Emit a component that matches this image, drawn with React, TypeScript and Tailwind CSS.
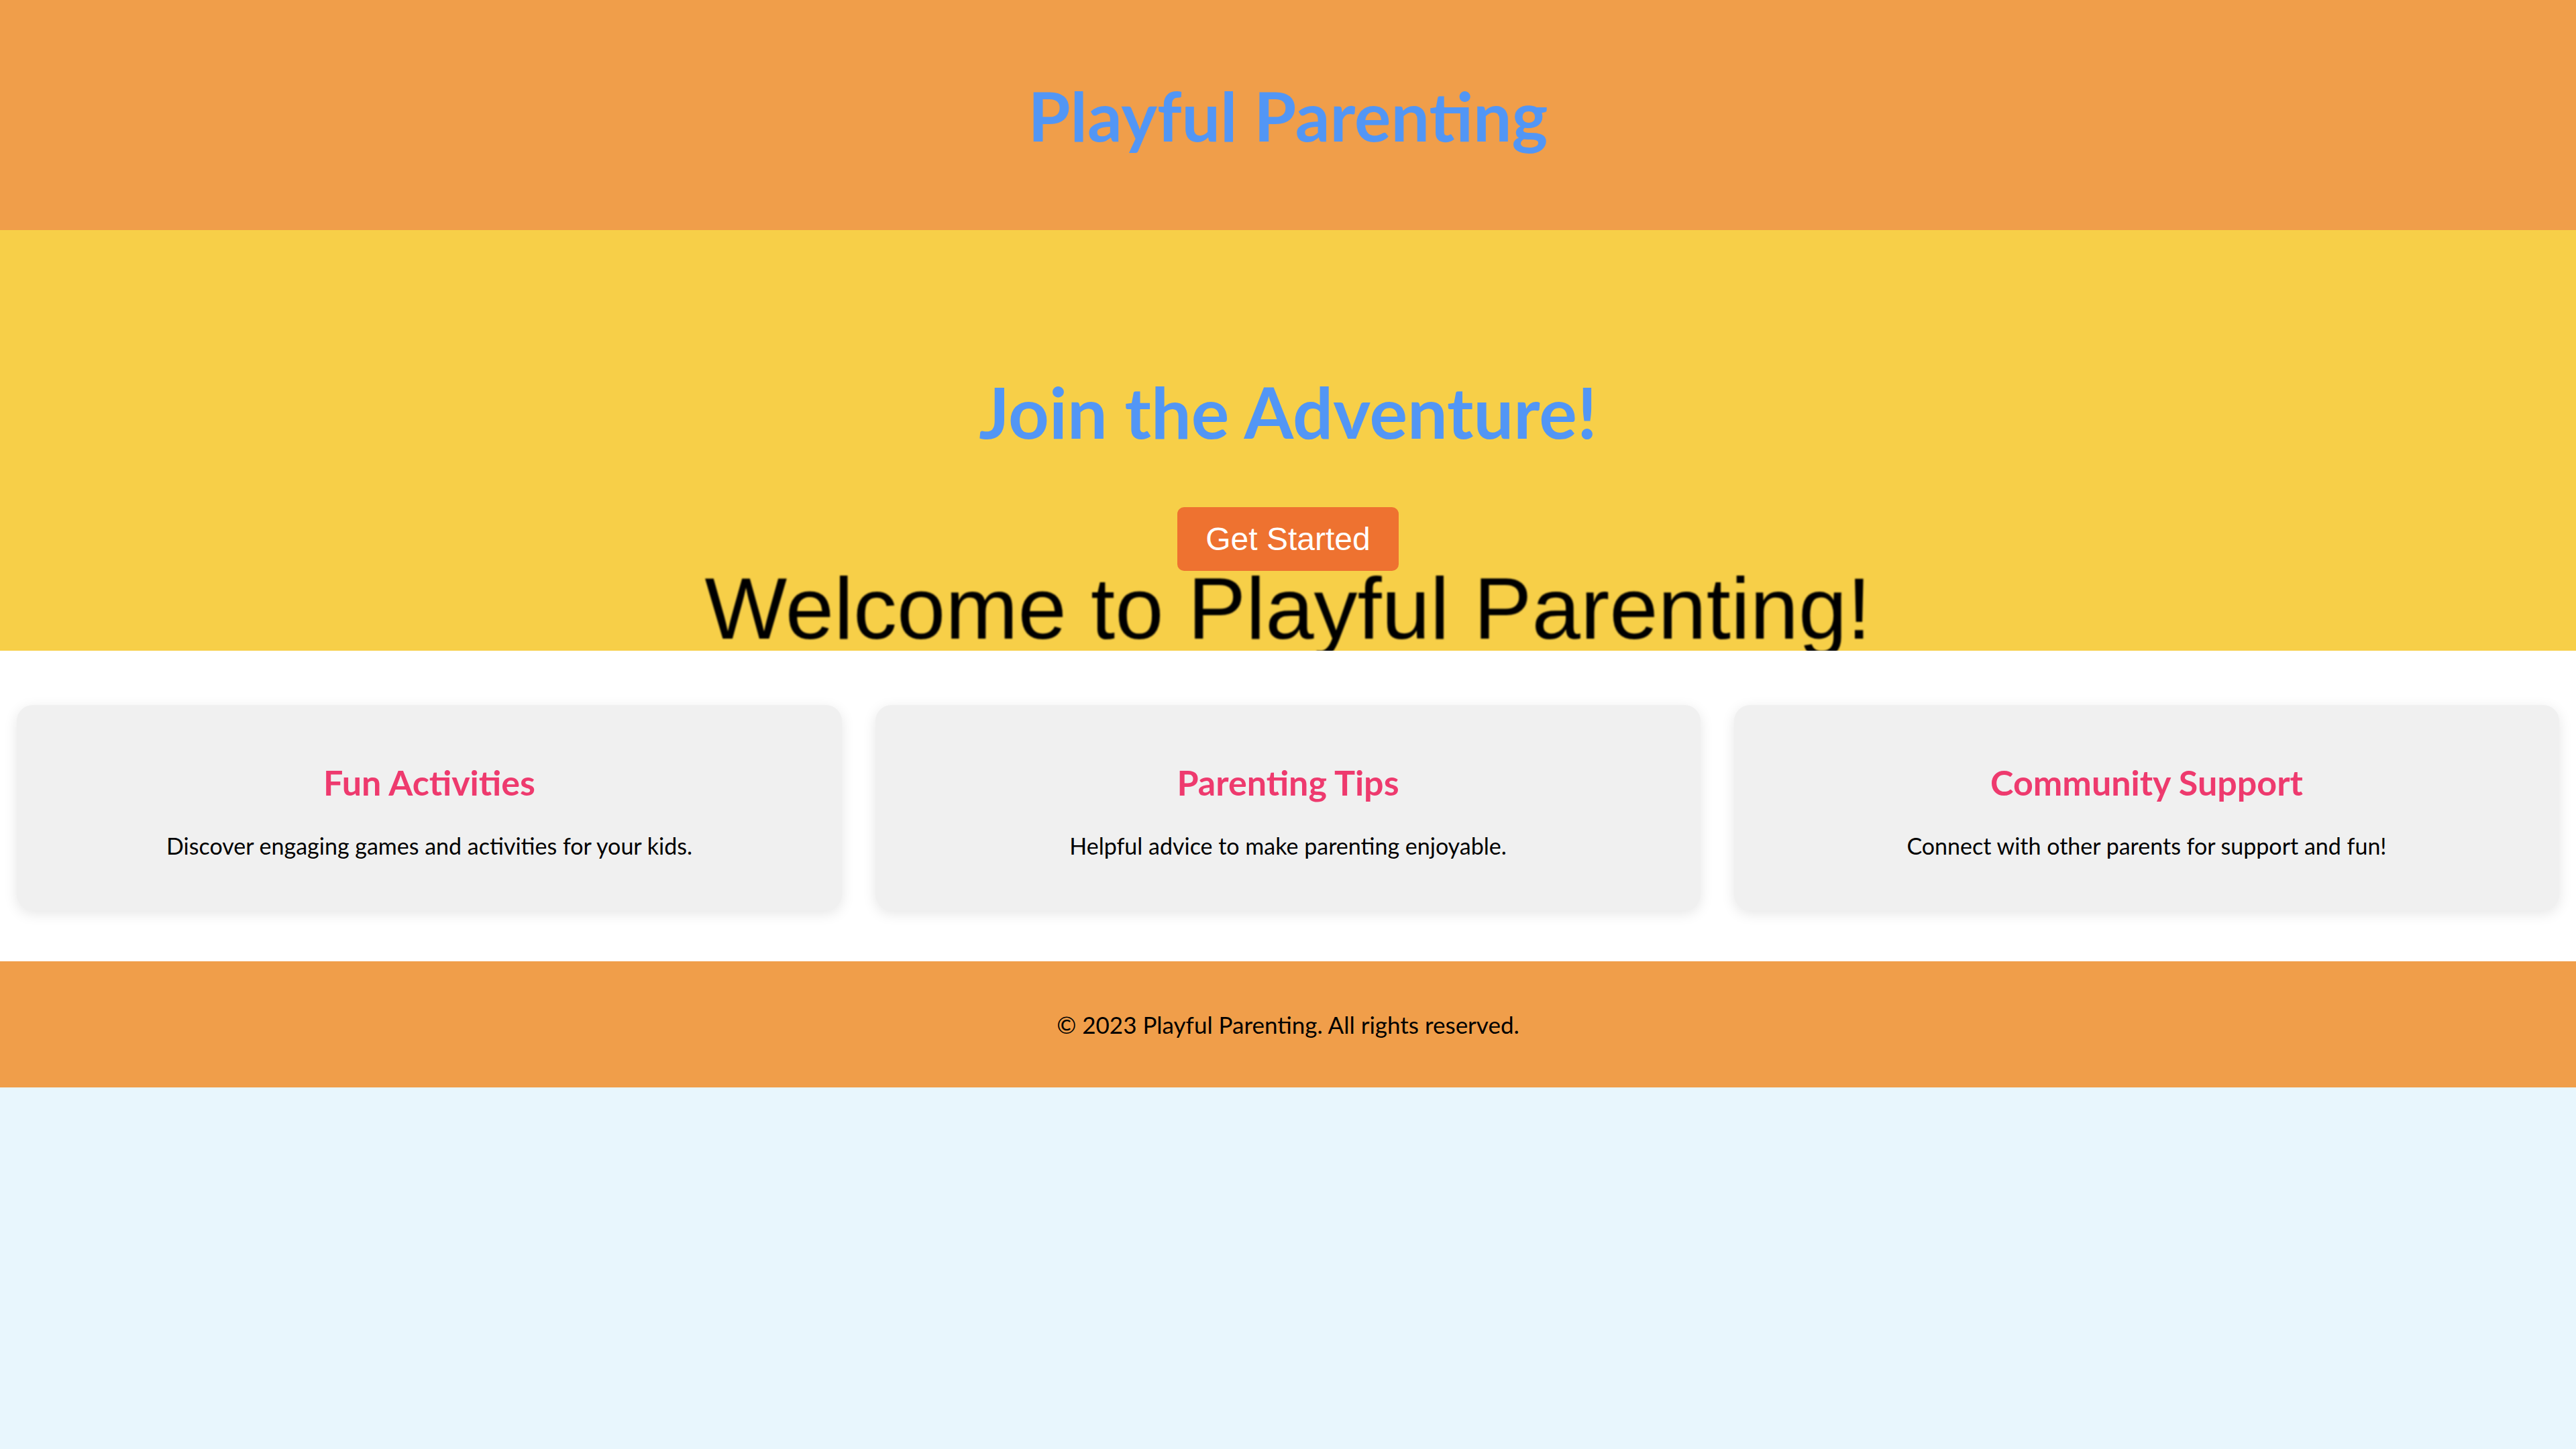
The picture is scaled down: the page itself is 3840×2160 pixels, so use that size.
import React from 'react';

const features = [
  {
    title: 'Fun Activities',
    text: 'Discover engaging games and activities for your kids.',
  },
  {
    title: 'Parenting Tips',
    text: 'Helpful advice to make parenting enjoyable.',
  },
  {
    title: 'Community Support',
    text: 'Connect with other parents for support and fun!',
  },
];

export default function App() {
  return (
    <div className="min-h-screen bg-[#e8f6fd] font-['Lato','Open_Sans',sans-serif]">
      {/* Header */}
      <header className="h-[343px] bg-[#f09e4a] flex items-center justify-center">
        <h1 className="text-[102px] leading-[120px] font-bold text-[#5296f5]">
          Playful Parenting
        </h1>
      </header>

      {/* Hero */}
      <section className="h-[627px] overflow-hidden bg-[#f7cf48] flex flex-col items-center pt-[220px]">
        <h2 className="shrink-0 text-[106px] leading-[100px] font-bold text-[#5296f5]">
          Join the Adventure!
        </h2>
        <button className="shrink-0 mt-[93px] h-[95px] px-[42px] rounded-[10px] bg-[#ee7230] text-white text-[48px] leading-[55px] font-['Liberation_Sans','Arial',sans-serif]">
          Get Started
        </button>
        <div className="-mt-[17px] shrink-0 text-[130px] leading-[147px] text-black font-['Liberation_Sans','Arial',sans-serif] whitespace-nowrap blur-[1px]">
          Welcome to Playful Parenting!
        </div>
      </section>

      {/* Features */}
      <section className="bg-white flex gap-[50px] px-[25px] pt-[81px] pb-[76px]">
        {features.map((f) => (
          <div
            key={f.title}
            className="flex-1 h-[306px] rounded-[24px] bg-[#f0f0f0] shadow-[0_5px_20px_rgba(0,0,0,0.1)] flex flex-col items-center pt-[85px] text-center"
          >
            <h3 className="text-[52px] leading-[60px] font-bold text-[#ee3a6e]">
              {f.title}
            </h3>
            <p className="mt-[45px] text-[34px] leading-[40px] text-black">
              {f.text}
            </p>
          </div>
        ))}
      </section>

      {/* Footer */}
      <footer className="h-[188px] bg-[#f09e4a] flex items-center justify-center">
        <p className="text-[35px] leading-[40px] text-black">
          © 2023 Playful Parenting. All rights reserved.
        </p>
      </footer>
    </div>
  );
}
